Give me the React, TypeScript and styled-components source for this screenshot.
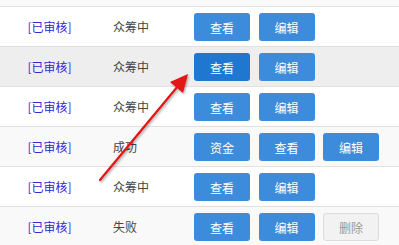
import React from "react";
import styled, { createGlobalStyle } from "styled-components";

const Global = createGlobalStyle`
  html, body { margin: 0; padding: 0; background: #fff; }
  body { font-family: "Noto Sans CJK SC", "Liberation Sans", sans-serif; }
`;

const Page = styled.div`
  position: relative;
  width: 399px;
  height: 245px;
  overflow: hidden;
`;

const TopStrip = styled.div`
  height: 6px;
  background: #f9f9f9;
`;

const Row = styled.div<{ $bg: string }>`
  display: grid;
  grid-template-columns: 100px 94px 1fr;
  align-items: center;
  height: 39px;
  border-top: 1px solid #e1e1e1;
  background: ${(p) => p.$bg};
`;

const Audit = styled.div`
  text-align: center;
  font-size: 12px;
  color: #2a2ad6;
  padding-right: 1px;
`;

const Status = styled.div`
  padding-left: 13px;
  font-size: 12px;
  color: #444;
`;

const Actions = styled.div`
  display: flex;
  align-items: center;
  gap: 8.5px;
  padding-top: 1px;
`;

const Btn = styled.div<{ $variant?: "normal" | "active" | "disabled" }>`
  width: 56px;
  height: 28px;
  box-sizing: border-box;
  border-radius: 3px;
  display: flex;
  align-items: center;
  justify-content: center;
  font-size: 12px;
  color: ${(p) => (p.$variant === "disabled" ? "#999" : "#fff")};
  background: ${(p) =>
    p.$variant === "active" ? "#1f77cf" : p.$variant === "disabled" ? "#f2f2f2" : "#3c8cdb"};
  border: ${(p) => (p.$variant === "disabled" ? "1px solid #dcdcdc" : "none")};
`;

const Arrow = styled.svg`
  position: absolute;
  left: 0;
  top: 0;
  pointer-events: none;
`;

type RowData = {
  status: string;
  buttons: { label: string; variant?: "normal" | "active" | "disabled" }[];
  bg: string;
};

const rows: RowData[] = [
  { status: "众筹中", bg: "#fff", buttons: [{ label: "查看" }, { label: "编辑" }] },
  { status: "众筹中", bg: "#eeeeee", buttons: [{ label: "查看", variant: "active" }, { label: "编辑" }] },
  { status: "众筹中", bg: "#fff", buttons: [{ label: "查看" }, { label: "编辑" }] },
  { status: "成功", bg: "#f9f9f9", buttons: [{ label: "资金" }, { label: "查看" }, { label: "编辑" }] },
  { status: "众筹中", bg: "#fff", buttons: [{ label: "查看" }, { label: "编辑" }] },
  { status: "失败", bg: "#f9f9f9", buttons: [{ label: "查看" }, { label: "编辑" }, { label: "删除", variant: "disabled" }] },
];

export default function App() {
  return (
    <Page>
      <Global />
      <TopStrip />
      {rows.map((r, i) => (
        <Row key={i} $bg={r.bg}>
          <Audit>[已审核]</Audit>
          <Status>{r.status}</Status>
          <Actions>
            {r.buttons.map((b, j) => (
              <Btn key={j} $variant={b.variant}>
                {b.label}
              </Btn>
            ))}
          </Actions>
        </Row>
      ))}
      <Arrow width="399" height="245" viewBox="0 0 399 245">
        <defs>
          <filter id="sh" x="-20%" y="-20%" width="140%" height="140%">
            <feDropShadow dx="1" dy="1.5" stdDeviation="1.2" floodColor="#000" floodOpacity="0.35" />
          </filter>
        </defs>
        <g filter="url(#sh)">
          <line x1="100" y1="180" x2="178" y2="86" stroke="#e51212" strokeWidth="2.2" strokeLinecap="round" />
          <polygon points="188,74 183,93 170,82" fill="#e51212" />
        </g>
      </Arrow>
    </Page>
  );
}
